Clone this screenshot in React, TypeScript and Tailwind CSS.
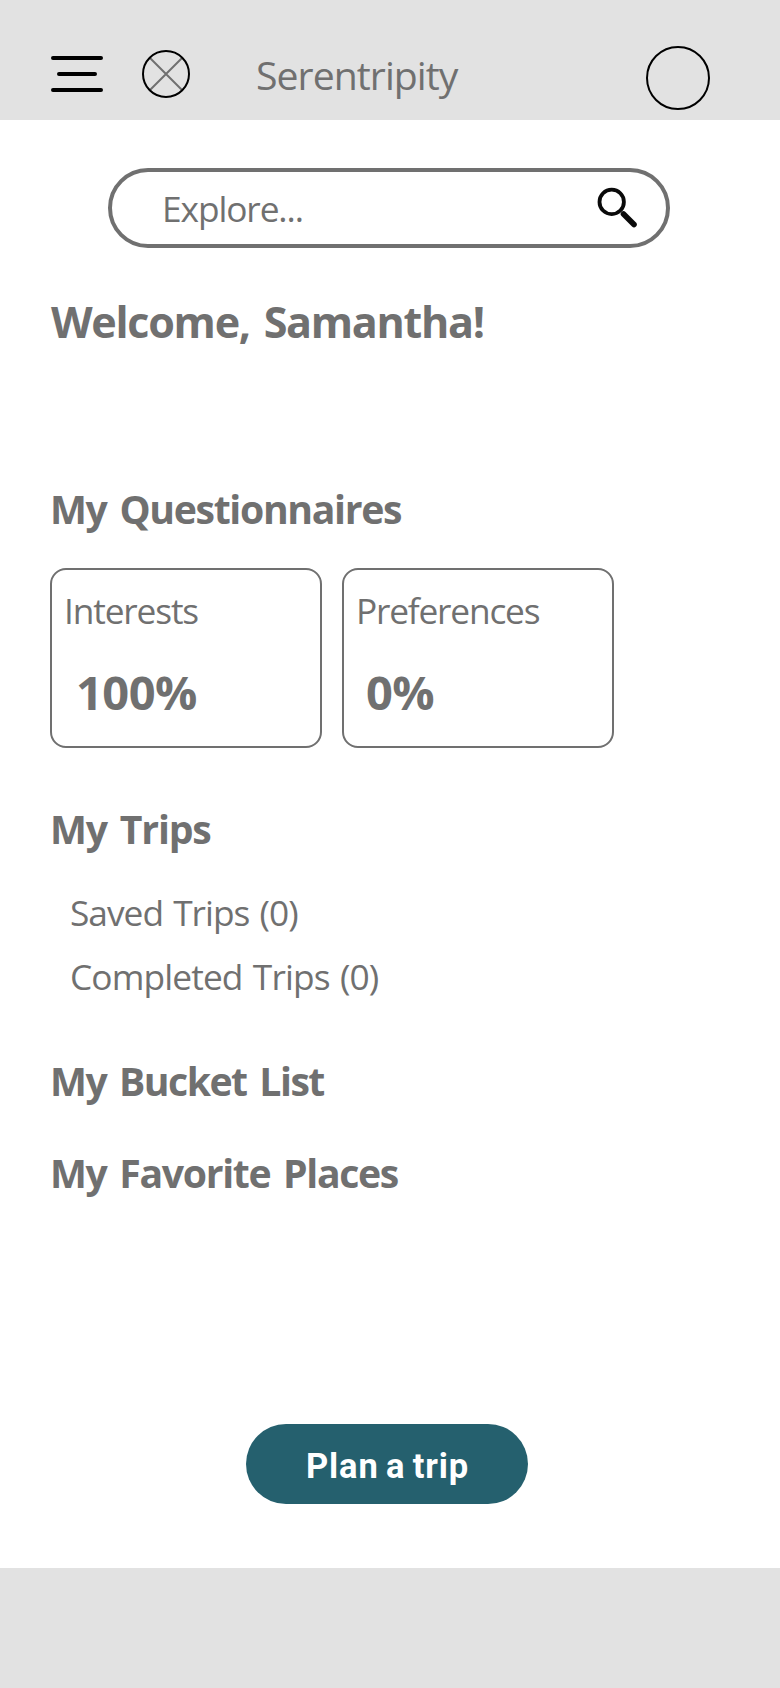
const heading = "h-14 whitespace-nowrap text-[39.2px] leading-[56px] font-bold [word-spacing:4px]";

export default function App() {
  return (
    <div className="flex h-[1688px] w-[780px] flex-col bg-white font-['Open_Sans',sans-serif] text-[#707070]">
      <header className="flex h-[120px] shrink-0 items-start bg-[#e2e2e2]">
        <button aria-label="Menu" className="mt-[56px] ml-[51px]">
          <svg width="52" height="36" viewBox="0 0 52 36" className="block" stroke="#000" strokeWidth="4" strokeLinecap="round">
            <path d="M2 2H50M8 18H44M2 34H50" />
          </svg>
        </button>
        <svg width="48" height="48" viewBox="0 0 48 48" className="mt-[50px] ml-[39px] block shrink-0" fill="none" strokeWidth="2">
          <path d="M8 8L40 40M40 8L8 40" stroke="#707070" />
          <circle cx="24" cy="24" r="23" stroke="#000" />
        </svg>
        <h1 className="mt-[47px] ml-[66px] w-[390px] text-[39.2px] leading-[56px] tracking-[-0.95px]">Serentripity</h1>
        <div className="mt-[46px] size-16 shrink-0 rounded-full border-2 border-black" />
      </header>

      <main className="flex h-[1448px] shrink-0 flex-col items-start">
        <div className="mt-12 ml-[108px] flex h-20 w-[562px] items-center justify-between rounded-full border-4 border-[#707070] pr-[25px] pl-[50px]">
          <span className="text-[35.3px] leading-[48px] tracking-[-1.1px]">Explore...</span>
          <svg width="48" height="48" viewBox="0 0 48 48" fill="none" stroke="#0a0a0a">
            <circle cx="18.7" cy="17.9" r="12.2" strokeWidth="3.8" />
            <path d="M30.5 30L41 40.5" strokeWidth="5.6" strokeLinecap="round" />
          </svg>
        </div>

        <h2 className="mt-11 ml-[51px] h-[60px] text-[43.1px] leading-[60px] font-bold tracking-[-1.3px] whitespace-nowrap [word-spacing:4px]">Welcome, Samantha!</h2>

        <h3 className={`${heading} mt-[129px] ml-[50px] tracking-[-1.33px]`}>My Questionnaires</h3>
        <div className="mt-[31px] ml-[50px] flex gap-5">
          <section className="h-[180px] w-[272px] rounded-2xl border-2 border-[#707070] pt-4 pl-3">
            <h4 className="text-[35.3px] leading-[48px] tracking-[-1.15px]">Interests</h4>
            <p className="mt-[26px] pl-3 text-[47px] leading-[64px] font-bold tracking-[-0.5px]">100%</p>
          </section>
          <section className="h-[180px] w-[272px] rounded-2xl border-2 border-[#707070] pt-4 pl-3">
            <h4 className="text-[35.3px] leading-[48px] tracking-[-1.21px]">Preferences</h4>
            <p className="mt-[26px] pl-2.5 text-[47px] leading-[64px] font-bold tracking-[-0.6px]">0%</p>
          </section>
        </div>

        <h3 className={`${heading} mt-[53px] ml-[50px] tracking-[-1.2px]`}>My Trips</h3>
        <ul className="mt-[31px] ml-[70px] flex flex-col gap-4 text-[35.3px] leading-[48px] [word-spacing:2px]">
          <li className="tracking-[-1px]">Saved Trips (0)</li>
          <li className="tracking-[-0.88px]">Completed Trips (0)</li>
        </ul>

        <h3 className={`${heading} mt-[53px] ml-[50px] tracking-[-1.5px]`}>My Bucket List</h3>
        <h3 className={`${heading} mt-9 ml-[50px] tracking-[-1.35px]`}>My Favorite Places</h3>

        <button className="mt-[223px] ml-[246px] h-20 w-[282px] rounded-full bg-[#25606e] pt-1 pl-[60px] text-left font-['Roboto',sans-serif] text-[34.5px] leading-10 font-bold tracking-[0.85px] text-white [word-spacing:-2px]">
          Plan a trip
        </button>
      </main>

      <footer className="h-[120px] shrink-0 bg-[#e2e2e2]" />
    </div>
  );
}
